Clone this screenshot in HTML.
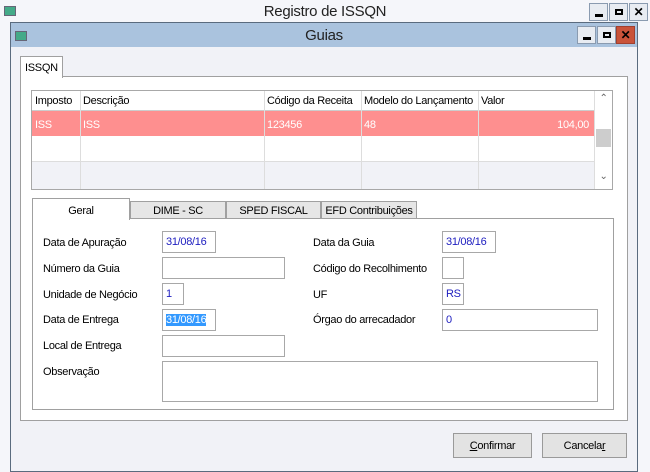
<!DOCTYPE html>
<html><head><meta charset="utf-8"><style>
*{margin:0;padding:0;box-sizing:border-box}
body{width:650px;height:464px;background:#f5f6fa;font-family:"Liberation Sans",sans-serif;font-size:11px;color:#000;position:relative;overflow:hidden;letter-spacing:-0.3px}
.a{position:absolute}
.tb{position:absolute;border:1px solid #8a9bb0;background:#e8ecf2;width:19px;height:18px;font-weight:bold;font-size:12px;text-align:center;line-height:16px}
.mn::after{content:"";position:absolute;left:5px;top:10px;width:8px;height:3px;background:#000}
.mx::after{content:"";position:absolute;left:5px;top:5px;width:8px;height:6px;border:2px solid #000;border-top-width:2px;box-sizing:border-box}
.in{position:absolute;background:#fff;border:1px solid #a8a8a8;height:22px;color:#2020c0;padding:4px 3px;font-size:11px}
.lb{position:absolute;font-size:11px}
.tab{position:absolute;top:201px;height:18px;border:1px solid #a0a0a0;background:#e6e6e6;text-align:center;font-size:11px;padding-top:3px}
.c{position:absolute;top:0;bottom:0;border-left:1px solid #ddd}
</style></head><body>
<div class="a" style="left:4px;top:6px;width:12px;height:10px;background:#4a8;border:1px solid #667"></div>
<div class="a" style="left:0;top:3px;width:650px;text-align:center;font-size:15px;color:#222">Registro de ISSQN</div>
<div class="tb mn" style="left:589px;top:3px"></div>
<div class="tb mx" style="left:609px;top:3px"></div>
<div class="tb" style="left:629px;top:3px">&#10005;</div>

<div class="a" style="left:10px;top:22px;width:628px;height:450px;border:1px solid #5a6b7e;background:#f1f2f7"></div>
<div class="a" style="left:11px;top:23px;width:626px;height:24px;background:#aac3de"></div>
<div class="a" style="left:15px;top:31px;width:12px;height:10px;background:#4a8;border:1px solid #667"></div>
<div class="a" style="left:11px;top:27px;width:626px;text-align:center;font-size:15px;color:#222">Guias</div>
<div class="tb mn" style="left:577px;top:26px"></div>
<div class="tb mx" style="left:597px;top:26px"></div>
<div class="tb" style="left:616px;top:26px;background:#c9533a;border-color:#a04030;color:#000">&#10005;</div>

<div class="a" style="left:20px;top:76px;width:608px;height:345px;background:#fff;border:1px solid #a0a0a0"></div>
<div class="a" style="left:20px;top:56px;width:43px;height:22px;background:#fff;border:1px solid #a0a0a0;border-bottom:none;padding:5px 0 0 4px;font-size:11px">ISSQN</div>

<div class="a" style="left:31px;top:90px;width:582px;height:100px;border:1px solid #a8a8a8;background:#fff;overflow:hidden">
 <div class="a" style="left:0;top:0;width:562px;height:20px;border-bottom:1px solid #ccc;background:#fff"></div>
 <div class="a" style="left:0;top:20px;width:562px;height:25px;background:#fe8f8f"></div>
 <div class="a" style="left:0;top:70px;width:562px;height:28px;background:#f1f2f7;border-top:1px solid #ddd"></div>
 <div class="c" style="left:48px"></div><div class="c" style="left:232px"></div><div class="c" style="left:329px"></div><div class="c" style="left:446px"></div>
 <div class="a" style="left:3px;top:4px">Imposto</div><div class="a" style="left:51px;top:4px">Descrição</div><div class="a" style="left:235px;top:4px">Código da Receita</div><div class="a" style="left:332px;top:4px">Modelo do Lançamento</div><div class="a" style="left:449px;top:4px">Valor</div>
 <div class="a" style="left:3px;top:28px;color:#fff">ISS</div><div class="a" style="left:51px;top:28px;color:#fff">ISS</div><div class="a" style="left:235px;top:28px;color:#fff">123456</div><div class="a" style="left:332px;top:28px;color:#fff">48</div><div class="a" style="left:500px;top:28px;width:57px;text-align:right;color:#fff">104,00</div>
 <div class="a" style="left:562px;top:0;width:18px;height:98px;background:#fff;border-left:1px solid #ddd"></div>
 <div class="a" style="left:563px;top:2px;width:17px;text-align:center;color:#666;font-size:10px">&#8963;</div>
 <div class="a" style="left:564px;top:38px;width:15px;height:18px;background:#cdcdcd"></div>
 <div class="a" style="left:563px;top:80px;width:17px;text-align:center;color:#666;font-size:10px">&#8964;</div>
</div>

<div class="a" style="left:32px;top:218px;width:582px;height:192px;border:1px solid #a0a0a0;background:#fff"></div>
<div class="a" style="left:32px;top:198px;width:98px;height:22px;border:1px solid #a0a0a0;border-bottom:none;background:#fff;text-align:center;padding-top:6px">Geral</div>
<div class="tab" style="left:130px;width:96px">DIME - SC</div>
<div class="tab" style="left:226px;width:95px">SPED FISCAL</div>
<div class="tab" style="left:321px;width:96px">EFD Contribuições</div>

<div class="lb" style="left:43px;top:237px">Data de Apuração</div>
<div class="lb" style="left:43px;top:263px">Número da Guia</div>
<div class="lb" style="left:43px;top:289px">Unidade de Negócio</div>
<div class="lb" style="left:43px;top:314px">Data de Entrega</div>
<div class="lb" style="left:43px;top:340px">Local de Entrega</div>
<div class="lb" style="left:43px;top:366px">Observação</div>
<div class="in" style="left:162px;top:231px;width:54px">31/08/16</div>
<div class="in" style="left:162px;top:257px;width:123px"></div>
<div class="in" style="left:162px;top:283px;width:22px">1</div>
<div class="in" style="left:162px;top:309px;width:54px"><span style="background:#3399ff;color:#fff">31/08/16</span></div>
<div class="in" style="left:162px;top:335px;width:123px"></div>
<div class="in" style="left:162px;top:361px;width:436px;height:41px"></div>

<div class="lb" style="left:313px;top:237px">Data da Guia</div>
<div class="lb" style="left:313px;top:263px">Código do Recolhimento</div>
<div class="lb" style="left:313px;top:289px">UF</div>
<div class="lb" style="left:313px;top:314px">Órgao do arrecadador</div>
<div class="in" style="left:442px;top:231px;width:54px">31/08/16</div>
<div class="in" style="left:442px;top:257px;width:22px"></div>
<div class="in" style="left:442px;top:283px;width:22px">RS</div>
<div class="in" style="left:442px;top:309px;width:156px">0</div>

<div class="a" style="left:453px;top:433px;width:79px;height:25px;border:1px solid #9a9a9a;background:#e3e3e3;text-align:center;padding-top:6px"><u>C</u>onfirmar</div>
<div class="a" style="left:542px;top:433px;width:85px;height:25px;border:1px solid #9a9a9a;background:#e3e3e3;text-align:center;padding-top:6px">Cancela<u>r</u></div>
</body></html>
